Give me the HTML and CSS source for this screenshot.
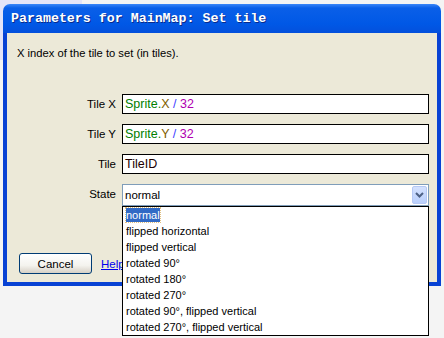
FILE: index.html
```html
<!DOCTYPE html>
<html>
<head>
<meta charset="utf-8">
<link rel="stylesheet" href="styles.css">
</head>
<body>
<div class="window">
  <div class="titlebar"><span class="title">Parameters for MainMap: Set tile</span></div>
  <div class="client">
    <p class="desc">X index of the tile to set (in tiles).</p>
    <div class="form">
      <label class="lbl">Tile X</label>
      <div class="field"><span class="g">Sprite.</span><span class="r">X</span> <span class="b">/</span> <span class="m">32</span></div>
      <label class="lbl">Tile Y</label>
      <div class="field"><span class="g">Sprite.</span><span class="r">Y</span> <span class="b">/</span> <span class="m">32</span></div>
      <label class="lbl">Tile</label>
      <div class="field"><span class="k">TileID</span></div>
      <label class="lbl lbl-state">State</label>
      <div class="combo">
        <span class="combo-text">normal</span>
        <span class="combo-btn"><svg width="9" height="6" viewBox="0 0 9 6"><path d="M1 1 L4.5 4.5 L8 1" fill="none" stroke="#4d6185" stroke-width="2"/></svg></span>
        <ul class="list">
          <li><span class="sel">normal</span></li>
          <li>flipped horizontal</li>
          <li>flipped vertical</li>
          <li>rotated 90°</li>
          <li>rotated 180°</li>
          <li>rotated 270°</li>
          <li>rotated 90°, flipped vertical</li>
          <li>rotated 270°, flipped vertical</li>
        </ul>
      </div>
    </div>
    <div class="buttons">
      <button class="btn">Cancel</button>
      <a class="help" href="#">Help</a>
    </div>
  </div>
</div>
</body>
</html>
```
FILE: styles.css
```css
html, body {
  margin: 0;
  padding: 0;
}
body {
  width: 444px;
  height: 338px;
  overflow: hidden;
  background: #f4f4f4 linear-gradient(#e4e4f8, #e4e4f8) no-repeat 0 0 / 82px 60px;
  font-family: "Liberation Sans", Arial, sans-serif;
  font-size: 11px;
  color: #000;
}
.window {
  margin: 4px 0 0 3px;
  width: 438px;
}
.titlebar {
  height: 29px;
  border-radius: 7px 7px 0 0;
  background: linear-gradient(#3a86f8 0px, #0a5fe8 4px, #0058e6 20px, #0450dc 29px);
  display: flex;
  align-items: center;
  padding-left: 8px;
}
.title {
  font-family: "Liberation Mono", "Courier New", monospace;
  font-weight: bold;
  font-size: 13.3px;
  color: #fff;
  text-shadow: 1px 1px 0 #0a2a8a;
}
.client {
  height: 249px;
  background: #ece9d8;
  border: 4px solid #0842d4;
  border-top: none;
  position: relative;
}
.desc {
  margin: 0;
  padding: 13px 0 0 10px;
  line-height: 14px;
  font-size: 11.2px;
}
.form {
  display: grid;
  grid-template-columns: 109px 307px;
  column-gap: 6px;
  row-gap: 10px;
  margin-top: 34px;
}
.lbl {
  text-align: right;
  padding-top: 4px;
  line-height: 13px;
  font-size: 11.5px;
}
.field {
  height: 20px;
  box-sizing: border-box;
  border: 1px solid #000;
  background: #fff;
  font-size: 12.5px;
  line-height: 18px;
  padding-left: 2px;
  white-space: pre;
}
.g { color: #008000; }
.r { color: #806000; }
.b { color: #4040ff; }
.m { color: #b000b0; }
.k { color: #200000; }
.combo {
  position: relative;
  height: 22px;
  box-sizing: border-box;
  border: 1px solid #7f9db9;
  background: #fff;
  display: flex;
  align-items: center;
}
.combo-text {
  flex: 1;
  padding-left: 2px;
  font-size: 11.5px;
}
.combo-btn {
  width: 15px;
  height: 18px;
  margin-right: 1px;
  background: linear-gradient(#d4e1fe, #b9cffc);
  border: 1px solid #b6c9f5;
  box-sizing: border-box;
  border-radius: 2px;
  display: flex;
  align-items: center;
  justify-content: center;
}
.list {
  position: absolute;
  top: 21px;
  left: -1px;
  width: 307px;
  box-sizing: border-box;
  margin: 0;
  padding: 0;
  list-style: none;
  background: #fff;
  border: 1px solid #000;
  z-index: 2;
}
.list li {
  height: 16px;
  line-height: 16px;
  padding-left: 3px;
  font-size: 11px;
  white-space: nowrap;
}
.sel {
  background: #316ac5;
  color: #fff;
  outline: 1px dotted #e0c080;
  padding: 1px 0;
}
.buttons {
  display: flex;
  align-items: center;
  margin: 47px 0 0 12px;
  gap: 9px;
}
.btn {
  width: 73px;
  height: 21px;
  box-sizing: border-box;
  border: 1px solid #003c74;
  border-radius: 3px;
  background: linear-gradient(#fff, #f4f3ee 60%, #d6d0c5);
  font-family: "Liberation Sans", Arial, sans-serif;
  font-size: 11.5px;
  color: #000;
  padding: 0;
}
.help {
  color: #0000ee;
  text-decoration: underline;
  font-size: 11.5px;
}
```
